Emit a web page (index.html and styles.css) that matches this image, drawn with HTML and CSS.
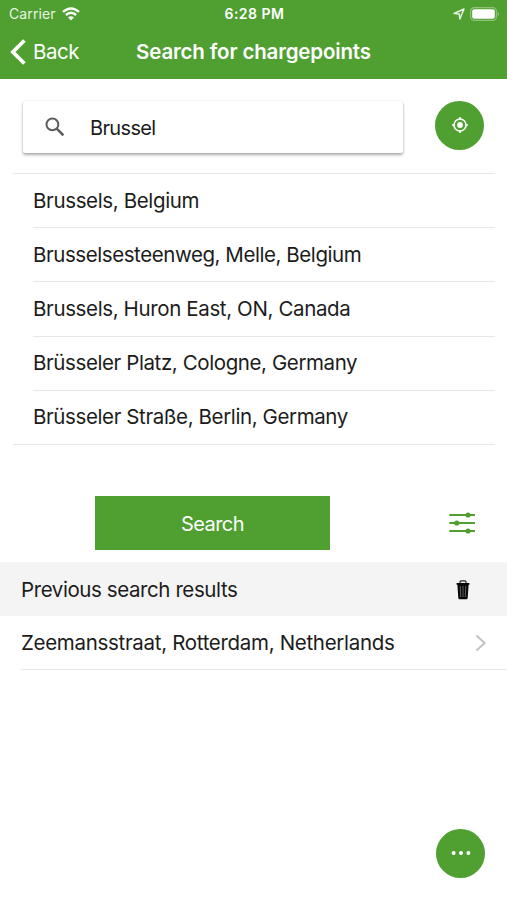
FILE: index.html
```html
<!DOCTYPE html>
<html lang="en">
<head>
<meta charset="utf-8">
<title>Search for chargepoints</title>
<link rel="stylesheet" href="styles.css">
</head>
<body>
<header class="header">
  <div class="status">
    <div class="status-left"><span class="carrier">Carrier</span>
      <svg class="wifi" width="18" height="14" viewBox="0 0 18 14" fill="none" stroke="#fff" stroke-width="2.4"><path d="M1 4.9Q9-2 17 4.9M3.9 8Q9 3.6 14.1 8"/><path d="M9 13.4L6.1 10.4Q9 8 11.9 10.4Z" fill="#fff" stroke="none"/></svg>
    </div>
    <span class="clock">6:28 PM</span>
    <div class="status-right">
      <svg width="12" height="12" viewBox="0 0 12 12" fill="none" stroke="#e9f5e2" stroke-width="1.5" stroke-linejoin="round"><path d="M1 5.5L11 1L6.8 11L6.2 6Z"/></svg>
      <svg width="30" height="14" viewBox="0 0 30 14"><rect x=".6" y=".6" width="25.8" height="12.8" rx="3.6" fill="none" stroke="#91c37a" stroke-width="1.2"/><rect x="2.2" y="2.3" width="22.6" height="9.4" rx="2" fill="#fff"/><path d="M27.7 4.8Q30.6 7 27.7 9.2Z" fill="#91c37a"/></svg>
    </div>
  </div>
  <nav class="nav">
    <a class="back"><svg width="16" height="26" viewBox="0 0 16 26" fill="none" stroke="#fff" stroke-width="3.8"><path d="M14.4 1.5L2.9 13L14.4 24.5"/></svg><span class="back-label">Back</span></a>
    <h1 class="title">Search for chargepoints</h1>
  </nav>
</header>
<main>
  <section class="search-row">
    <div class="search-box">
      <svg width="20" height="20" viewBox="0 0 20 20" fill="none" stroke="#5c5c5c" stroke-width="2"><circle cx="7.4" cy="7.4" r="5.9"/><path d="M11.7 11.7L18.4 18.4" stroke-width="2.5"/></svg>
      <span class="query">Brussel</span>
    </div>
    <button class="round locate" aria-label="Use my location"><svg width="18" height="18" viewBox="0 0 18 18" fill="none" stroke="#fff" stroke-width="1.6"><circle cx="9" cy="9" r="6"/><circle cx="9" cy="9" r="2.9" fill="#fff" stroke="none"/><path d="M9 1v2.4M9 14.6V17M1 9h2.4M14.6 9H17"/></svg></button>
  </section>
  <ul class="suggestions">
    <li><span class="s1">Brussels, Belgium</span></li>
    <li><span class="s2">Brusselsesteenweg, Melle, Belgium</span></li>
    <li><span class="s3">Brussels, Huron East, ON, Canada</span></li>
    <li><span class="s4">Brüsseler Platz, Cologne, Germany</span></li>
    <li><span class="s5">Brüsseler Straße, Berlin, Germany</span></li>
  </ul>
  <section class="actions">
    <button class="search-button">Search</button>
    <svg width="28" height="22" viewBox="0 0 28 22" fill="#4f9f31" stroke="#4f9f31" stroke-width="2"><path d="M1.3 3H27M1.3 11H27M1.3 19H27"/><g stroke="none"><circle cx="20" cy="3" r="2.6"/><circle cx="8.8" cy="11" r="2.6"/><circle cx="20" cy="19" r="2.6"/></g></svg>
  </section>
  <div class="previous-head">
    <span class="previous-label">Previous search results</span>
    <svg width="14" height="20" viewBox="0 0 14 20"><path d="M4 3V2Q4 .8 5.2 .8H8.8Q10 .8 10 2V3" fill="none" stroke="#222" stroke-width="1.2"/><path d="M.6 3H13.4V4.7H12.6L11.7 18Q11.6 19.2 10.4 19.2H3.6Q2.4 19.2 2.3 18L1.4 4.7H.6Z" fill="#080808"/><path d="M4.3 6L4.7 17M7 6V17M9.7 6L9.3 17" stroke="#777" stroke-width=".8"/></svg>
  </div>
  <div class="previous-item">
    <span class="previous-name">Zeemansstraat, Rotterdam, Netherlands</span>
    <svg width="12" height="18" viewBox="0 0 12 18" fill="none" stroke="#c3c3c6" stroke-width="2"><path d="M1.4 1.4L9.7 9L1.4 16.6"/></svg>
  </div>
</main>
<button class="round more" aria-label="More"><svg width="20" height="6" viewBox="0 0 20 6" fill="#fff"><circle cx="2.6" cy="3" r="2"/><circle cx="10" cy="3" r="2"/><circle cx="17.4" cy="3" r="2"/></svg></button>
</body>
</html>
```
FILE: styles.css
```css
* { box-sizing: border-box; }
body { margin: 0; min-height: 900px; background: #fff; color: #1c1c1c; font-family: Inter, "Liberation Sans", sans-serif; font-size: 20.5px; line-height: 26px; }
svg { display: block; flex: none; }
button { border: 0; padding: 0; font: inherit; color: #fff; background: #4f9f31; }
span, h1 { white-space: nowrap; }
.header { height: 79px; background: #4f9f31; color: #fff; }
.status { height: 27px; display: grid; grid-template-columns: 1fr auto 1fr; align-items: center; padding: 0 7px 0 9px; font-size: 14px; line-height: 20px; }
.status-left, .status-right { display: flex; align-items: center; }
.status-left { gap: 6px; color: #e9f5e2; }
.carrier { letter-spacing: .1px; }
.status-right { justify-content: flex-end; gap: 5px; }
.clock { font-weight: 600; letter-spacing: .5px; }
.nav { height: 50px; display: grid; grid-template-columns: 1fr auto 1fr; align-items: center; padding: 0 10px; }
.back { display: flex; align-items: center; gap: 7px; }
.back-label { letter-spacing: -.5px; }
.title { margin: 0; font-size: 20.5px; font-weight: 600; line-height: 26px; letter-spacing: -.16px; }
.search-row { height: 94px; display: flex; justify-content: space-between; align-items: flex-start; padding: 22px 23px 0; }
.search-box { width: 380px; height: 52px; display: flex; align-items: center; gap: 25px; padding-left: 22px; border-radius: 2px; box-shadow: 0 2px 3px rgba(0,0,0,.32), 0 0 2px rgba(0,0,0,.12); }
.query { font-size: 20px; letter-spacing: -.65px; padding-top: 1px; }
.round { width: 49px; height: 49px; border-radius: 50%; display: flex; align-items: center; justify-content: center; padding-bottom: 2px; }
.suggestions { list-style: none; margin: 0 12px 0 13px; padding: 0 0 0 20px; border: solid #e8e8e8; border-width: 1px 0; height: 272px; display: flex; flex-direction: column; }
.suggestions li { flex: 1; display: flex; align-items: center; border-bottom: 1px solid #e8e8e8; }
.suggestions li:last-child { border: 0; }
.s1 { letter-spacing: -.36px; }
.s2 { letter-spacing: -.43px; }
.s3 { letter-spacing: -.37px; }
.s4 { letter-spacing: -.4px; }
.s5 { letter-spacing: -.39px; }
.actions { height: 117px; display: flex; align-items: flex-start; justify-content: space-between; padding: 51px 31px 0 95px; }
.actions svg { margin-top: 16px; }
.search-button { width: 235px; height: 54px; font-size: 20px; letter-spacing: -.6px; padding-top: 1px; }
.previous-head { height: 54px; display: flex; align-items: center; justify-content: space-between; padding: 1px 37px 0 21px; background: #f4f4f4; }
.previous-label { letter-spacing: -.41px; }
.previous-item { height: 54px; margin-left: 21px; padding-right: 20px; display: flex; align-items: center; justify-content: space-between; border-bottom: 1px solid #e8e8e8; }
.previous-name { letter-spacing: -.31px; }
.more { position: fixed; left: 436px; top: 829px; }
```
